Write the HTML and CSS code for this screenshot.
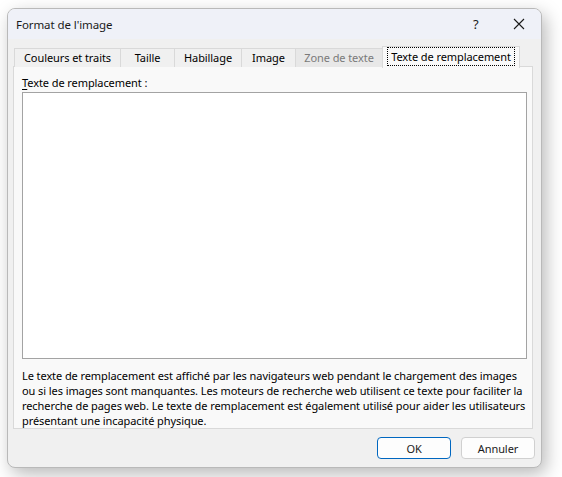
FILE: index.html
```html
<!DOCTYPE html>
<html lang="fr">
<head>
<meta charset="utf-8">
<title>Format de l'image</title>
<link rel="stylesheet" href="styles.css">
</head>
<body>
<div class="window">
  <div class="titlebar">
    <span class="title">Format de l'image</span>
    <span class="help">?</span>
    <span class="close">
      <svg width="12" height="12" viewBox="0 0 12 12"><path d="M1 1 L11 11 M11 1 L1 11" stroke="#1a1a1a" stroke-width="1.1" fill="none"/></svg>
    </span>
  </div>
  <div class="content">
    <div class="tabs">
      <div class="tab t1">Couleurs et traits</div>
      <div class="tab t2">Taille</div>
      <div class="tab t3">Habillage</div>
      <div class="tab t4">Image</div>
      <div class="tab t5 disabled">Zone de texte</div>
      <div class="tab t6 selected"><span class="focus">Texte de remplacement</span></div>
    </div>
    <div class="panel">
      <div class="label"><u>T</u>exte de remplacement :</div>
      <div class="textarea"></div>
      <p class="desc">Le texte de remplacement est affiché par les navigateurs web pendant le chargement des images<br>ou si les images sont manquantes. Les moteurs de recherche web utilisent ce texte pour faciliter la<br>recherche de pages web. Le texte de remplacement est également utilisé pour aider les utilisateurs<br>présentant une incapacité physique.</p>
    </div>
    <div class="buttons">
      <div class="btn ok">OK</div>
      <div class="btn">Annuler</div>
    </div>
  </div>
</div>
</body>
</html>
```
FILE: styles.css
```css
html, body {
  margin: 0;
  padding: 0;
  background: #ffffff;
}
body {
  font-family: "Noto Sans", "Open Sans", sans-serif;
  font-size: 11px;
  letter-spacing: -0.08px;
  color: #000;
  padding: 8px 0 0 7px;
  width: 562px;
  height: 477px;
  box-sizing: border-box;
  overflow: hidden;
}
.window {
  width: 535px;
  height: 460px;
  box-sizing: border-box;
  border: 1px solid #b9b9b9;
  border-radius: 8px;
  background: #f0f0f0;
  box-shadow: 4px 6px 18px rgba(0,0,0,0.28);
  overflow: hidden;
  display: flex;
  flex-direction: column;
}
.titlebar {
  height: 30px;
  background: #eff1f8;
  display: flex;
  align-items: center;
  padding-left: 8px;
  flex: none;
}
.title {
  flex: 1;
  font-size: 11.5px;
  color: #1a1a1a;
  padding-top: 1px;
}
.help {
  width: 12px;
  margin-right: 28px;
  font-size: 13px;
  color: #1a1a1a;
  padding-bottom: 1px;
}
.close {
  width: 12px;
  height: 12px;
  margin-right: 16px;
  display: flex;
}
.content {
  flex: 1;
  padding: 7px 6px 0 5px;
  display: flex;
  flex-direction: column;
}
.tabs {
  display: flex;
  align-items: flex-end;
  height: 21px;
  padding-left: 1px;
  position: relative;
  z-index: 1;
  margin-bottom: -1px;
  flex: none;
}
.tab {
  height: 19px;
  box-sizing: border-box;
  border: 1px solid #d9d9d9;
  border-bottom: none;
  border-right: none;
  background: #f0f0f0;
  display: flex;
  align-items: center;
  justify-content: center;
  color: #000;
  white-space: nowrap;
  line-height: 1;
  padding-bottom: 1px;
}
.t1 { width: 106px; }
.t2 { width: 54px; }
.t3 { width: 67px; }
.t4 { width: 54px; }
.t5 { width: 87px; background: #e8e8e8; color: #7a7a7a; }
.tab.selected {
  width: 138px;
  height: 22px;
  background: #f9f9f9;
  border-right: 1px solid #d9d9d9;
  margin-bottom: -1px;
  padding-bottom: 2px;
}
.focus {
  outline: 1px dotted #000;
  outline-offset: 0;
  padding: 3px 3px 3px 3px;
  line-height: 1;
}
.panel {
  width: 520px;
  height: 363px;
  box-sizing: border-box;
  border: 1px solid #d9d9d9;
  background: #f9f9f9;
  padding: 8px 0 0 8px;
  display: flex;
  flex-direction: column;
  flex: none;
}
.label {
  height: 17px;
  line-height: 16px;
  color: #000;
  flex: none;
}
.label u {
  text-underline-offset: 2px;
}
.textarea {
  width: 505px;
  height: 267px;
  box-sizing: border-box;
  border: 1px solid #a3a3a3;
  background: #ffffff;
  flex: none;
}
.desc {
  margin: 9px 0 0 0;
  line-height: 15px;
  white-space: nowrap;
  color: #000;
  flex: none;
}
.buttons {
  display: flex;
  justify-content: flex-end;
  gap: 10px;
  padding-top: 8px;
  flex: none;
}
.btn {
  width: 74px;
  height: 22px;
  box-sizing: border-box;
  border: 1px solid #d0d0d0;
  border-radius: 4px;
  background: #fdfdfd;
  display: flex;
  align-items: center;
  justify-content: center;
  color: #1a1a1a;
}
.btn.ok {
  border: 1px solid #0067c0;
}
```
